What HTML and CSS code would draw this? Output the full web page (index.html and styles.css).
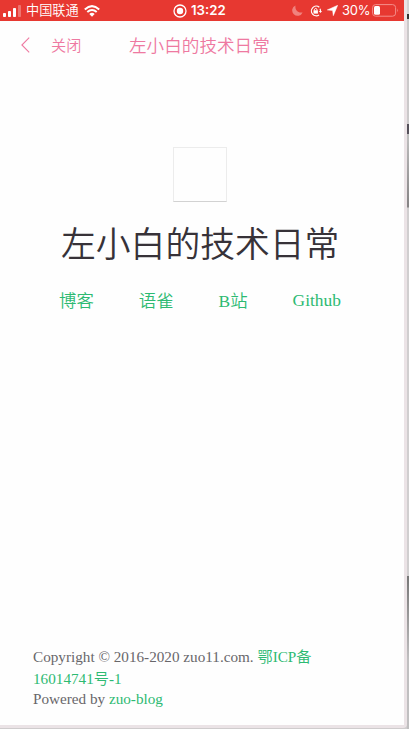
FILE: index.html
```html
<!DOCTYPE html>
<html lang="zh-CN">
<head>
<meta charset="utf-8">
<title>左小白的技术日常</title>
<link rel="stylesheet" href="styles.css">
</head>
<body>
<div class="device">
  <div class="screen">
    <div class="status">
      <div class="status-left">
        <svg width="18" height="12" viewBox="0 0 18 12" fill="#fff"><rect x="0" y="8" width="3" height="4" rx=".8"/><rect x="5" y="6" width="3" height="6" rx=".8"/><rect x="10" y="3" width="3" height="9" rx=".8"/><rect x="15" y="0" width="3" height="12" rx=".8" opacity=".3"/></svg>
        <span class="carrier">中国联通</span>
        <svg width="16" height="12" viewBox="0 0 16 12" fill="none" stroke="#fff" stroke-width="2"><path d="M.8 4.4Q8-2.1 15.2 4.4M3.3 7Q8 2.9 12.7 7"/><path d="M5.3 8.9Q8 6.7 10.7 8.9L8 11.7Z" fill="#fff" stroke="none"/></svg>
      </div>
      <div class="status-time">
        <svg width="14" height="14" viewBox="0 0 14 14"><circle cx="7" cy="7" r="6" fill="none" stroke="#fff" stroke-width="1.3"/><circle cx="7" cy="7" r="3.2" fill="#fff"/></svg>
        <span>13:22</span>
      </div>
      <div class="status-right">
        <svg class="moon" width="11" height="11" viewBox="0 0 11 11"><path d="M3.5.4C2.7 4.9 5.7 8.4 10.6 7.4A5.4 5.4 0 1 1 3.5.4Z" fill="#f0827e"/></svg>
        <svg class="lock" width="12" height="12" viewBox="0 0 12 12" fill="none" stroke="#fff" stroke-width="1.2"><path d="M9.3 2.3A4.8 4.8 0 1 0 9 9.9M10 3.8Q10.6 5 10.5 6.3"/><path d="M8.7 6L10.5 8L12 6Z" fill="#fff" stroke="none"/><rect x="3.5" y="5.3" width="4.4" height="3.3" fill="#fff" stroke="none"/><path d="M4.4 5.5V4.3Q5.7 2.4 7 4.3V5.5" stroke-width="1"/></svg>
        <svg class="arrow" width="11" height="11" viewBox="0 0 11 11"><path d="M10.7.3L6.3 10.7L5.6 5.4L.3 4.9Z" fill="#fff" stroke="#fff" stroke-width=".5"/></svg>
        <span class="percent">30%</span>
        <svg width="27" height="13" viewBox="0 0 27 13"><rect x=".6" y=".6" width="23" height="11.6" rx="3" fill="none" stroke="#f48f8b"/><rect x="2" y="2" width="6" height="8.8" rx="1.5" fill="#fff"/><path d="M25.3 4.5Q27 6.4 25.3 8.3Z" fill="#f48f8b"/></svg>
      </div>
    </div>
    <div class="nav">
      <svg class="back" width="9" height="16" viewBox="0 0 9 16" fill="none" stroke="#ee79a1" stroke-width="1.1"><path d="M8.2.6L.9 8L8.2 15.4"/></svg>
      <span class="close">关闭</span>
      <span class="nav-title">左小白的技术日常</span>
    </div>
    <main>
      <div class="avatar"></div>
      <h1>左小白的技术日常</h1>
      <div class="links"><a>博客</a><a>语雀</a><a>B站</a><a class="github">Github</a></div>
    </main>
    <footer>
      <p>Copyright © 2016-2020 zuo11.com. <a>鄂ICP备<br>16014741号-1</a></p>
      <p class="powered">Powered by <a>zuo-blog</a></p>
    </footer>
  </div>
  <div class="edge"></div>
</div>
</body>
</html>
```
FILE: styles.css
```css
* { box-sizing: border-box; }
body { margin: 0; background: #cfcccd; overflow: hidden; }
.device { display: flex; width: 409px; height: 729px; }
.screen {
  display: flex;
  flex-direction: column;
  width: 407px;
  height: 728px;
  border-right: 3px solid #ebe3e6;
  border-bottom: 3px solid #ebe3e6;
  border-bottom-right-radius: 4px;
  background: #fefefe;
  font-family: "Liberation Serif", "Noto Sans CJK SC", serif;
}
.edge {
  width: 2px;
  height: 729px;
  background: linear-gradient(#d4d2d3 0 14px, #333 14px 19px, #cbc9ca 19px 124px, #55515a 124px 134px, #bbb 134px 140px, #858384 207px, #d0cecf 208px 576px, #777 576px, #c0bfc0 660px);
}
.status {
  display: grid;
  grid-template-columns: 173px 119px 1fr;
  align-items: center;
  height: 21px;
  background: #e73831;
  color: #fff;
  font-family: Inter, "Noto Sans CJK SC", sans-serif;
  font-size: 13px;
  line-height: 21px;
}
.status svg { flex: none; }
.status-left, .status-time, .status-right { display: flex; align-items: center; }
.status-left { padding-left: 3px; }
.carrier { width: 53px; margin: 0 5px 0 5px; font-weight: 350; font-size: 13.2px; white-space: nowrap; }
.status-time { gap: 4px; font-weight: 600; font-size: 13.2px; }
.lock { margin-left: 7px; }
.arrow { margin-left: 5px; }
.percent { width: 27px; margin: 0 3px 0 4px; font-size: 13px; letter-spacing: -.2px; }
.nav {
  display: flex;
  align-items: center;
  height: 48px;
  padding-left: 21px;
  color: #ee79a1;
  font-family: "Noto Sans CJK SC", sans-serif;
  font-weight: 350;
}
.close, .nav-title { padding-bottom: 2px; }
.close { width: 78px; margin-left: 21px; font-size: 15.2px; }
.nav-title { font-size: 17.6px; white-space: nowrap; }
main { flex: 1; padding-top: 78px; }
.avatar { width: 54px; height: 55px; margin-left: 173px; border: 1px solid #ececec; border-bottom-color: #d2d2d2; }
h1 {
  margin: 14px 0 0 61px;
  color: #373238;
  font: 350 34.8px/52px "Noto Sans CJK SC", sans-serif;
  white-space: nowrap;
}
a { color: #2dba72; }
.links { display: flex; gap: 45px; margin: 21px 0 0 59px; font-size: 17.4px; line-height: 25px; font-weight: 350; }
.github { line-height: 22px; }
footer { height: 79px; padding-left: 33px; color: #68666a; font-size: 15.2px; line-height: 22px; font-weight: 350; }
footer p { margin: 0; }
.powered { line-height: 18px; }
```
